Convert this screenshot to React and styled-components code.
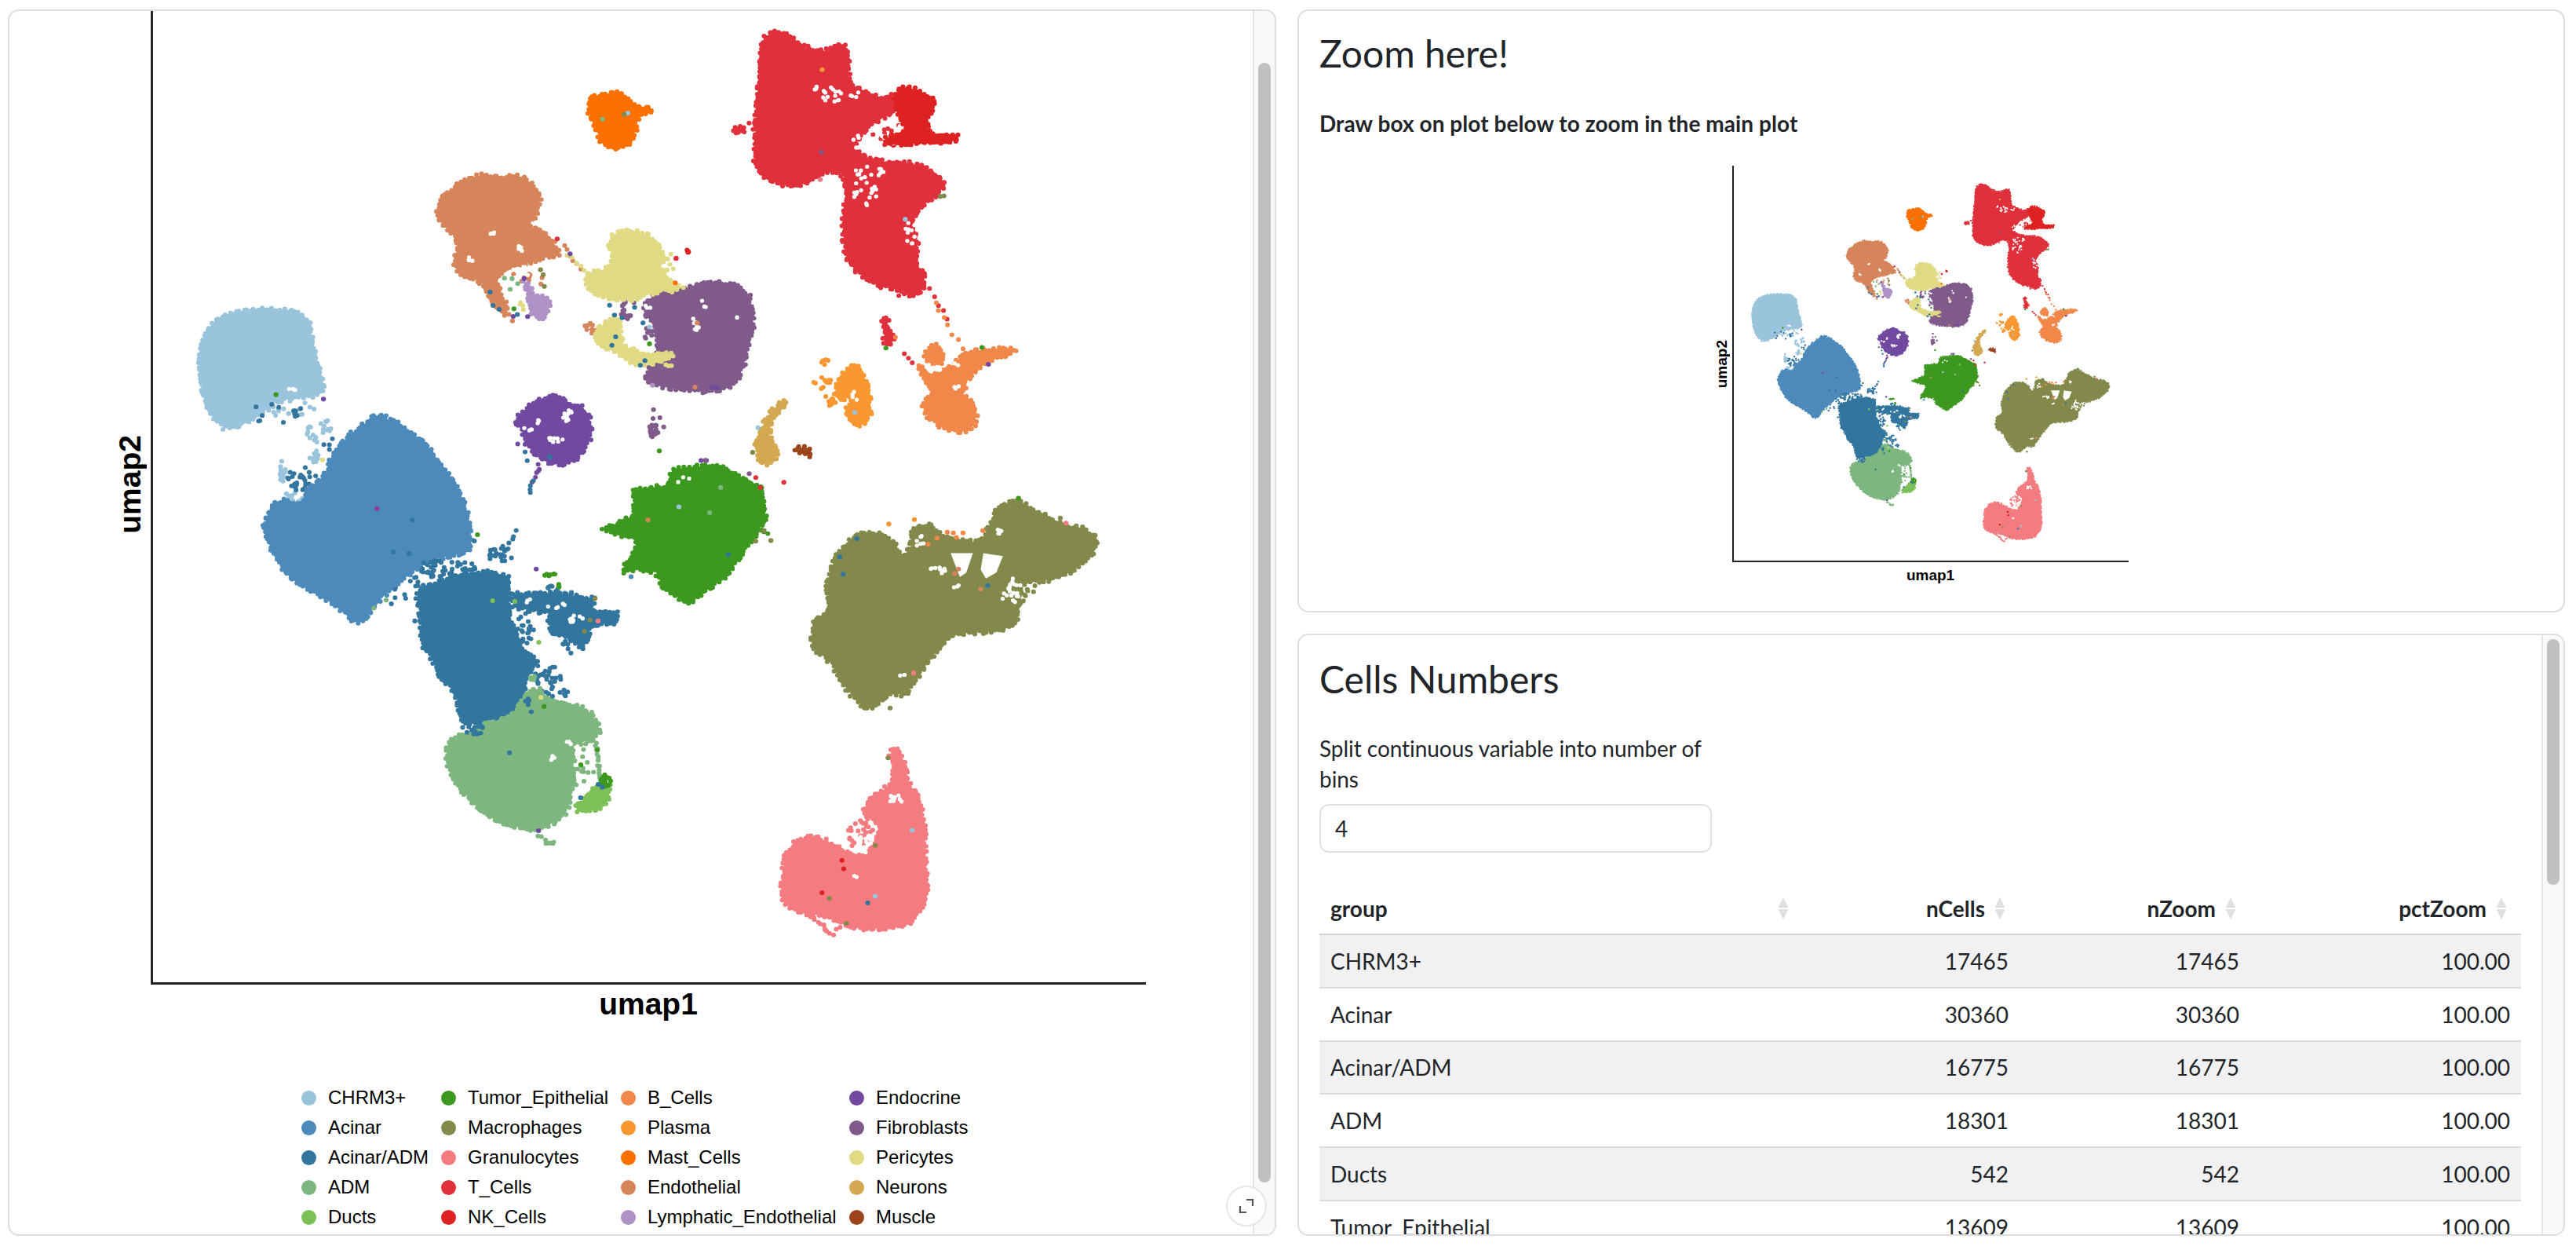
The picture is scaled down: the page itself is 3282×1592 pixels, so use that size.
import React from "react";
import styled, { createGlobalStyle } from "styled-components";

const C = {
  chrm: "#9AC3DC", acinar: "#4C8ABB", acinarAdm: "#32769F", adm: "#7DB77F", ducts: "#7CC057",
  tumor: "#3D981F", macro: "#83894A", gran: "#F47C80", t: "#E0303B", nk: "#DE2222",
  b: "#F1884A", plasma: "#F99731", mast: "#FC7000", endo: "#D6845A", lymph: "#AE91C6",
  endocrine: "#7149A0", fibro: "#7F5A8A", peri: "#E0DA85", neuron: "#D4A850", muscle: "#9C441B",
};

function mulberry(a) {
  return () => {
    a |= 0; a = (a + 0x6d2b79f5) | 0;
    let t = Math.imul(a ^ (a >>> 15), 1 | a);
    t = (t + Math.imul(t ^ (t >>> 7), 61 | t)) ^ t;
    return ((t ^ (t >>> 14)) >>> 0) / 4294967296;
  };
}
const rnd = mulberry(20240607);

/* data space of the scatter: the small plot's pixels; main plot pixels map onto it */
const toZ = (X, Y) => [148 + (X - 193) * 1.0402, 95 + (Y - 14) * 1.0887];
const crop = (ox, oy, sx, sy) => ({
  P: (pts) => pts.map(([x, y]) => toZ(ox + x / sx, oy + y / sy)),
  D: ([x, y, rx, ry, n]) => {
    const [a, b] = toZ(ox + x / sx, oy + y / sy);
    return [a, b, (rx / sx) * 1.04, (ry / sy) * 1.089, n];
  },
  T: ([x1, y1, x2, y2, n, s]) => {
    const [a, b] = toZ(ox + x1 / sx, oy + y1 / sy);
    const [c, d] = toZ(ox + x2 / sx, oy + y2 / sy);
    return [a, b, c, d, n, s];
  },
  S: ([x, y, col]) => {
    const [a, b] = toZ(ox + x / sx, oy + y / sy);
    return [a, b, col];
  },
});
const A = crop(320, 500, 3, 2.613);
const B = crop(540, 30, 2.063, 2.8);
const K = crop(960, 620, 3, 2.613);
const Z = crop(0, 0, 1.425, 1.96);

const chaikin = (pts) => {
  const out = [];
  pts.forEach((p, i) => {
    const q = pts[(i + 1) % pts.length];
    out.push([p[0] * 0.75 + q[0] * 0.25, p[1] * 0.75 + q[1] * 0.25]);
    out.push([p[0] * 0.25 + q[0] * 0.75, p[1] * 0.25 + q[1] * 0.75]);
  });
  return out;
};
const dot = (x, y) => `M${x.toFixed(1)} ${y.toFixed(1)}h.01`;
const edgeDots = (pts, step = 5, jitter = 2.2) => {
  let d = "";
  pts.forEach((p, i) => {
    const q = pts[(i + 1) % pts.length];
    const len = Math.hypot(q[0] - p[0], q[1] - p[1]);
    const n = Math.max(1, Math.round(len / step));
    for (let k = 0; k < n; k++) {
      const f = k / n;
      d += dot(p[0] + (q[0] - p[0]) * f + (rnd() - 0.5) * jitter * 2, p[1] + (q[1] - p[1]) * f + (rnd() - 0.5) * jitter * 2);
    }
  });
  return d;
};
const cloud = ([cx, cy, rx, ry, n]) => {
  let d = "";
  for (let i = 0; i < n; i++) {
    const a = rnd() * Math.PI * 2;
    const r = Math.sqrt(rnd());
    d += dot(cx + Math.cos(a) * r * rx, cy + Math.sin(a) * r * ry);
  }
  return d;
};
const trail = ([x1, y1, x2, y2, n, s]) => {
  let d = "";
  for (let i = 0; i < n; i++) {
    const f = i / Math.max(1, n - 1);
    d += dot(x1 + (x2 - x1) * f + (rnd() - 0.5) * s, y1 + (y2 - y1) * f + (rnd() - 0.5) * s);
  }
  return d;
};

const RAW = [
  { color: C.chrm,
    polys: [Z.P([[400,785],[480,770],[560,785],[565,870],[585,950],[585,990],[500,1000],[470,1040],[420,1075],[400,1070],[370,1020],[355,910],[370,830]])],
    clouds: [Z.D([530,1025,45,22,16]), A.D([240,130,35,40,14]), A.D([285,115,25,30,8]), A.D([235,210,18,30,12]), A.D([115,265,14,35,14]), A.D([150,350,45,22,10])],
    holes: [Z.D([530,970,16,6,4])] },
  { color: C.acinarAdm, polys: [], clouds: [Z.D([500,1035,55,24,14]), A.D([190,290,55,42,28]), A.D([290,170,20,30,4])] },
  { color: C.acinar,
    polys: [A.P([[450,95],[550,95],[590,130],[650,160],[700,215],[770,295],[800,350],[830,420],[840,520],[800,540],[740,550],[660,570],[600,610],[540,650],[470,710],[430,765],[390,770],[340,730],[270,685],[170,640],[110,590],[70,520],[40,465],[60,400],[100,355],[180,385],[215,320],[270,290],[310,200],[390,130]])],
    clouds: [A.D([480,88,45,12,14]), A.D([600,580,25,20,5])] },
  { color: C.acinarAdm, sharp: true,
    polys: [A.P([[640,650],[700,640],[780,610],[900,600],[980,615],[985,720],[990,780],[1040,870],[1095,900],[1050,960],[1040,1030],[980,1090],[880,1100],[810,1115],[790,1060],[780,1010],[720,950],[680,880],[650,850],[645,750],[630,690]]),
            A.P([[1000,675],[1150,670],[1310,690],[1300,730],[1395,735],[1395,770],[1330,775],[1290,790],[1290,830],[1260,855],[1190,810],[1140,800],[1135,740],[1000,720]])],
    clouds: [A.D([1040,790,42,52,26]), A.D([745,590,115,35,54]), A.D([950,545,48,30,24]), A.D([1130,960,55,50,26]), A.D([620,635,22,20,6]), A.D([555,680,35,30,4]), A.D([1150,655,25,12,5]), A.D([1200,840,30,20,4])],
    trails: [A.T([1005,465,990,510,4,6])],
    holes: [A.D([1180,715,50,8,5]), A.D([1240,760,28,14,8]), A.D([1070,700,30,8,3])] },
  { color: C.adm,
    polys: [A.P([[760,1160],[860,1120],[1000,1080],[1050,1000],[1085,985],[1130,1020],[1200,1040],[1280,1055],[1340,1130],[1300,1170],[1220,1160],[1230,1300],[1210,1400],[1150,1440],[1090,1465],[1000,1450],[900,1420],[810,1340],[750,1270],[742,1190]])],
    clouds: [A.D([1262,1250,48,80,18]), A.D([1140,1505,20,6,8]), A.D([1070,950,14,15,5])],
    trails: [A.T([1318,1170,1332,1290,14,4]), A.T([1095,1480,1125,1495,3,3])],
    holes: [A.D([1150,1225,8,14,4]), A.D([1210,1170,14,10,4])] },
  { color: C.acinarAdm, polys: [], clouds: [A.D([850,1125,50,18,16]), A.D([1170,1000,50,22,10]), A.D([1060,1030,24,18,4])] },
  { color: C.ducts, polys: [A.P([[1220,1405],[1300,1330],[1370,1290],[1365,1370],[1320,1395]])] },
  { color: C.tumor, sharp: true,
    polys: [Z.P([[1220,1175],[1300,1162],[1340,1190],[1385,1220],[1390,1300],[1370,1340],[1320,1440],[1250,1510],[1205,1475],[1190,1430],[1155,1425],[1130,1432],[1155,1370],[1150,1350],[1095,1325],[1150,1290],[1150,1225],[1210,1215]])],
    clouds: [A.D([1355,1298,24,22,18]), A.D([1140,612,22,6,8]), A.D([1170,650,6,10,3]), Z.D([1385,1335,12,10,5]), Z.D([1140,1410,12,20,6])],
    holes: [Z.D([1240,1200,16,8,3])] },
  { color: C.macro,
    polys: [K.P([[395,165],[460,150],[530,180],[570,240],[610,195],[600,170],[620,130],[690,130],[700,160],[790,180],[870,190],[910,120],[930,70],[1015,45],[1070,85],[1190,130],[1260,140],[1330,180],[1290,240],[1200,300],[1100,320],[1020,320],[1020,430],[980,480],[860,490],[770,495],[710,540],[660,600],[610,660],[580,700],[520,690],[470,740],[430,745],[370,695],[320,630],[290,580],[230,550],[220,490],[240,440],[290,420],[280,310],[330,210]])],
    clouds: [K.D([1050,350,45,22,10]), K.D([1020,390,22,14,4])],
    holes: [K.D([985,345,42,48,20]), K.D([710,280,32,14,9]), K.D([640,185,18,26,7]), K.D([785,340,18,8,3]), K.D([930,155,20,12,6]), K.D([570,632,16,5,3])],
    holePolys: [K.P([[755,225],[840,225],[815,290],[790,305]]), K.P([[880,225],[955,235],[930,290],[890,310],[870,280]])] },
  { color: C.gran,
    polys: [K.P([[520,875],[560,875],[585,960],[600,1000],[640,1050],[655,1130],[660,1280],[670,1360],[640,1420],[590,1470],[480,1480],[360,1475],[330,1455],[240,1430],[190,1430],[120,1400],[100,1350],[130,1200],[220,1165],[290,1190],[360,1220],[400,1240],[470,1200],[480,1120],[410,1100],[450,1040],[510,1010],[540,960]])],
    clouds: [K.D([400,1160,60,45,26])],
    trails: [K.T([222,1440,295,1495,10,5]), K.T([300,1495,350,1445,5,5])],
    holes: [K.D([540,1045,35,14,10]), K.D([390,1300,8,8,2]), K.D([425,1190,28,34,12])] },
  { color: C.t,
    polys: [B.P([[925,22],[960,40],[1010,95],[1060,100],[1105,65],[1120,130],[1115,215],[1160,240],[1190,265],[1240,255],[1240,320],[1200,340],[1170,370],[1135,420],[1150,470],[1200,495],[1300,500],[1365,550],[1365,600],[1310,650],[1280,720],[1300,780],[1290,850],[1320,910],[1310,960],[1285,975],[1250,950],[1190,940],[1130,880],[1105,820],[1100,680],[1110,620],[1105,530],[1060,530],[1020,560],[970,585],[900,560],[870,520],[870,400],[880,180],[885,60]]),
            B.P([[810,380],[835,360],[845,390],[820,392]]),
            B.P([[1200,1050],[1225,1055],[1215,1085],[1235,1115],[1235,1140],[1210,1150],[1212,1110]])],
    clouds: [B.D([1235,400,60,40,26]), B.D([1270,970,30,12,3])],
    trails: [B.T([1330,950,1375,1060,5,6]), B.T([1265,1178,1285,1212,3,2]), B.T([855,355,865,378,2,1]), B.T([662,840,695,815,2,1])],
    holes: [B.D([1070,255,28,30,14]), B.D([1235,400,68,50,32]), B.D([1300,460,32,24,16]), B.D([1175,525,45,25,12]), B.D([1160,600,32,52,20]), B.D([1280,750,14,42,10]), B.D([1140,430,18,30,8]), B.D([1030,230,5,14,3]), B.D([1135,255,20,12,4])] },
  { color: C.nk, polys: [B.P([[1260,220],[1335,260],[1345,300],[1320,350],[1330,395],[1405,395],[1405,420],[1330,430],[1220,430],[1215,405],[1275,385],[1245,320],[1235,260]])], clouds: [B.D([693,815,6,6,3])] },
  { color: C.b,
    polys: [B.P([[1320,1330],[1380,1290],[1420,1320],[1455,1390],[1445,1450],[1400,1465],[1340,1430],[1312,1380]]),
            B.P([[1295,1215],[1325,1250],[1380,1240],[1420,1180],[1470,1165],[1550,1160],[1555,1175],[1480,1210],[1430,1270],[1420,1310],[1340,1330],[1320,1290]]),
            B.P([[1340,1145],[1365,1170],[1370,1215],[1330,1215],[1312,1180]])],
    trails: [B.T([1345,1005,1415,1160,7,6]), B.T([1240,1120,1245,1125,1,1])],
    holes: [B.D([1345,1245,20,18,8]), B.D([1400,1300,10,10,3]), B.D([1410,1215,14,8,2])] },
  { color: C.plasma,
    polys: [B.P([[1120,1220],[1150,1230],[1165,1290],[1175,1360],[1175,1410],[1140,1445],[1100,1390],[1130,1340],[1090,1340],[1080,1290]])],
    clouds: [B.D([1050,1285,28,22,12]), B.D([1072,1345,18,25,10]), B.D([1055,1205,10,18,5])],
    holes: [B.D([1135,1330,10,22,4])] },
  { color: C.mast, polys: [B.P([[430,265],[480,250],[515,245],[540,280],[570,300],[600,305],[590,325],[560,330],[555,395],[525,450],[470,445],[450,370],[432,320]])] },
  { color: C.endo,
    polys: [B.P([[130,540],[200,548],[250,540],[300,590],[305,640],[290,700],[265,720],[320,740],[360,830],[330,830],[290,850],[240,870],[200,890],[185,920],[225,1035],[200,1040],[170,975],[150,920],[72,890],[90,770],[30,700],[35,640],[70,590]])],
    clouds: [B.D([225,880,40,20,10]), B.D([285,920,30,30,8]), B.D([435,1090,18,25,8])],
    trails: [B.T([368,790,410,878,6,4])],
    holes: [B.D([250,800,10,16,4]), B.D([120,840,6,22,3]), B.D([180,750,8,6,3]), B.D([250,890,26,24,10])] },
  { color: C.lymph, polys: [B.P([[255,920],[280,930],[280,975],[320,970],[335,1000],[315,1050],[285,1055],[280,1000]])] },
  { color: C.fibro,
    polys: [B.P([[610,960],[700,945],[720,925],[790,925],[850,950],[865,1030],[865,1100],[830,1270],[800,1305],[720,1320],[590,1290],[580,1260],[610,1200],[610,1090],[570,1020]])],
    clouds: [B.D([530,1030,16,30,14]), B.D([603,1455,13,26,22]), B.D([600,1000,25,30,6]), B.D([590,1110,12,30,6]), B.D([540,990,20,10,4])],
    trails: [B.T([602,1380,602,1412,2,1]), B.T([620,1408,630,1443,2,1])],
    holes: [B.D([738,1000,10,14,4]), B.D([712,1075,12,22,8]), B.D([820,1048,8,4,2]), B.D([590,1015,12,14,3])] },
  { color: C.peri,
    polys: [B.P([[500,745],[580,740],[630,810],[620,880],[640,920],[690,950],[600,960],[560,990],[470,985],[430,945],[420,895],[480,880],[500,830],[482,790]]),
            B.P([[480,1070],[510,1040],[515,1100],[520,1150],[570,1180],[650,1175],[650,1200],[590,1220],[550,1220],[500,1170],[450,1150],[445,1095]])],
    clouds: [B.D([640,860,20,40,6]), B.D([640,1225,14,8,3]), B.D([255,1015,6,20,4])],
    trails: [B.T([375,825,420,885,5,4])] },
  { color: C.endocrine,
    polys: [A.P([[1150,5],[1220,40],[1280,55],[1305,135],[1250,230],[1160,245],[1100,225],[1060,190],[1030,125],[1000,95],[1070,40]])],
    trails: [A.T([1100,245,1075,295,6,6]), A.T([1016,175,1045,175,2,1])],
    holes: [A.D([1210,80,24,22,12]), A.D([1060,125,22,8,5]), A.D([1170,160,50,14,8]), A.D([1090,100,14,6,3])] },
  { color: C.acinarAdm, polys: [], trails: [A.T([1075,300,1062,338,4,4]), A.T([1043,202,1052,230,2,1])], clouds: [A.D([1135,222,8,8,3])] },
  { color: C.neuron, polys: [B.P([[945,1345],[955,1350],[915,1420],[905,1480],[935,1530],[910,1575],[885,1575],[868,1500],[890,1440],[910,1390]])] },
  { color: C.muscle, polys: [B.P([[968,1525],[1010,1510],[1022,1550],[995,1540]])] },
];

const LAYERS = RAW.map((l) => {
  const polys = l.sharp ? l.polys : l.polys.map(chaikin);
  return {
    color: l.color,
    fill: polys.map((p) => "M" + p.map((q) => q.map((v) => v.toFixed(1)).join(" ")).join("L") + "Z").join(""),
    dots: polys.map((p) => edgeDots(p)).join("") + (l.clouds || []).map(cloud).join("") + (l.trails || []).map(trail).join(""),
    holes: (l.holes || []).map(cloud).join(""),
    holeFill: (l.holePolys || []).map((p) => "M" + p.map((q) => q.map((v) => v.toFixed(1)).join(" ")).join("L") + "Z").join(""),
  };
});

const SPECKS = [
  ...[[518,128,C.plasma],[616,113,C.plasma],[742,155,C.b],[765,158,C.b],[802,158,C.b],[878,150,C.b],[668,195,C.b],[703,175,C.b],[777,173,C.b],
     [785,278,C.endo],[770,293,C.endo],[870,345,C.endo],[395,177,C.acinarAdm],[897,333,C.acinarAdm],[343,295,C.acinarAdm],[330,238,C.acinarAdm],
     [1015,42,C.tumor],[1197,125,C.gran],[613,625,C.gran],[523,742,C.macro],[1117,95,C.macro],[1175,108,C.macro],
     [338,1250,C.nk],[345,1278,C.nk],[262,1358,C.nk],[290,1377,C.macro],[466,1200,C.macro],[355,1460,C.macro],[515,908,C.macro],
     [437,1392,C.acinarAdm],[466,1370,C.chrm],[607,1150,C.chrm],[40,150,C.macro],[8,185,C.macro],[66,183,C.macro]].map(K.S),
  ...[[1047,165,C.plasma],[1045,460,C.fibro],[1042,558,C.gran],[1266,700,C.chrm],[1358,618,C.macro],[1368,616,C.macro],[1215,1160,C.tumor],
     [1468,1158,C.tumor],[1485,1218,C.endocrine],[468,342,C.adm],[535,320,C.chrm],[525,325,C.macro],[349,770,C.t],[383,823,C.endocrine],
     [694,815,C.nk],[662,840,C.t],[660,927,C.mast],[172,960,C.acinarAdm],[180,1008,C.acinarAdm],[196,1022,C.acinarAdm],[235,1020,C.tumor],
     [233,1047,C.endocrine],[244,1040,C.acinarAdm],[271,1048,C.endocrine],[231,1063,C.endo],[210,910,C.adm],[230,912,C.adm],[245,930,C.adm],[225,950,C.adm],[262,912,C.endocrine],
     [315,940,C.macro],[305,880,C.macro],[312,898,C.macro],[487,1007,C.acinarAdm],[500,1042,C.acinarAdm],[520,1052,C.acinarAdm],[553,1015,C.acinarAdm],[503,1120,C.acinarAdm],[493,1150,C.acinarAdm],
     [575,1070,C.acinarAdm],[592,1085,C.chrm],[592,1145,C.tumor],[580,1205,C.acinarAdm],[568,1222,C.acinarAdm],[718,1070,C.endo],[712,1300,C.endo],[600,1293,C.lymph],
     [1133,1390,C.chrm],[878,1445,C.chrm],[864,1533,C.macro],[618,1528,C.tumor],[757,1302,C.endocrine],[770,1302,C.endocrine],[728,1562,C.endocrine],[742,1562,C.endocrine]].map(B.S),
  ...[[477,390,"#8E3A9A"],[862,477,C.tumor],[850,498,C.acinarAdm],[612,428,C.acinarAdm],[540,535,C.acinarAdm],[600,540,C.acinarAdm],[512,695,C.adm],[465,722,C.adm],[532,708,C.acinarAdm],
     [622,765,C.acinarAdm],[1087,592,C.endocrine],[920,697,C.ducts],[1005,700,C.ducts],[1097,836,C.ducts],[1324,765,C.gran],[1293,762,C.macro],[1272,800,C.macro],[1312,690,C.macro],
     [1105,1020,C.peri],[1117,1050,C.tumor],[1068,1068,C.acinarAdm],[1322,1195,C.tumor],[1258,1245,C.tumor],[1325,1310,C.acinarAdm],[1340,1320,C.acinarAdm],[1257,1355,C.acinarAdm],
     [1096,1465,C.endocrine],[268,228,C.peri],[272,25,C.endocrine],[90,10,C.tumor],[985,1205,C.acinarAdm],[1222,670,C.acinarAdm],[1190,842,C.acinarAdm],[1220,872,C.acinarAdm],[1515,428,C.endo]].map(A.S),
  ...[[1232,1268,C.chrm],[1308,1220,C.adm],[1288,1283,C.adm],[1322,1388,C.acinarAdm],[1145,1443,C.acinar],[1280,1152,C.fibro],[1360,1185,C.fibro],[1372,1195,C.t],[1423,1207,C.t],[1380,1220,C.t]].map(Z.S),
];

const Scatter = ({ viewBox }) => (
  <PlotSvg viewBox={viewBox} preserveAspectRatio="none">
    {LAYERS.map((l, i) => (
      <g key={i}>
        {l.fill && <path d={l.fill} fill={l.color} />}
        {l.dots && <path d={l.dots} fill="none" stroke={l.color} strokeWidth="6.4" strokeLinecap="round" />}
        {l.holes && <path d={l.holes} fill="none" stroke="#fff" strokeWidth="5.6" strokeLinecap="round" />}
        {l.holeFill && <path d={l.holeFill} fill="#fff" />}
      </g>
    ))}
    {SPECKS.map(([x, y, c], i) => (
      <circle key={i} cx={x} cy={y} r="3.3" fill={c} />
    ))}
  </PlotSvg>
);

const GlobalStyle = createGlobalStyle`
  html, body { margin: 0; padding: 0; background: #fff; }
  body { font-family: "Lato", "Noto Sans", sans-serif; color: #212529; }
  * { box-sizing: border-box; }
`;

const Page = styled.div`
  width: 3282px;
  height: 1592px;
  padding: 12px 14px 18px 10px;
  display: grid;
  grid-template-columns: 1616px 1615px;
  column-gap: 27px;
  overflow: hidden;
`;
const RightColumn = styled.div`
  display: grid;
  grid-template-rows: 768px 767px;
  row-gap: 27px;
  min-height: 0;
`;
const Card = styled.section`
  position: relative;
  display: flex;
  min-height: 0;
  min-width: 0;
  border: 2px solid #dedede;
  border-radius: 14px;
  background: #fff;
  overflow: hidden;
`;
const CardBody = styled.div`
  flex: 1;
  min-width: 0;
  overflow: hidden;
  padding: ${(p) => p.$padding || "0"};
`;
const ScrollTrack = styled.div`
  flex: 0 0 28px;
  background: #f9f9f9;
  border-left: 2px solid #e6e6e6;
  padding-left: 5px;
`;
const ScrollThumb = styled.div`
  width: 16px;
  margin-top: ${(p) => p.$top}px;
  height: ${(p) => p.$height}px;
  border-radius: 8px;
  background: #c1c1c1;
`;
const ExpandButton = styled.button`
  position: absolute;
  right: 10px;
  bottom: 10px;
  width: 52px;
  height: 52px;
  padding: 0;
  border-radius: 50%;
  border: 2px solid #e6e6e6;
  background: rgba(255, 255, 255, 0.82);
  display: flex;
  align-items: center;
  justify-content: center;
  svg { display: block; }
`;

/* plot figure */
const Figure = styled.div`
  display: grid;
  grid-template-columns: ${(p) => p.$labelCol}px ${(p) => p.$w}px;
  grid-template-rows: ${(p) => p.$h}px auto;
  margin: ${(p) => p.$top || 0}px 0 0 ${(p) => p.$left || 0}px;
`;
const YLabel = styled.div`
  justify-self: end;
  align-self: center;
  writing-mode: vertical-rl;
  transform: rotate(180deg);
  font: bold ${(p) => p.$size}px/1 "Liberation Sans", Arial, sans-serif;
  color: #000;
  margin-right: ${(p) => p.$gap}px;
  margin-bottom: ${(p) => p.$shift}px;
`;
const Canvas = styled.div`
  border-left: ${(p) => p.$stroke}px solid #222;
  border-bottom: ${(p) => p.$stroke}px solid #222;
  min-width: 0;
  min-height: 0;
`;
const PlotSvg = styled.svg`
  display: block;
  width: 100%;
  height: 100%;
`;
const XLabel = styled.div`
  grid-column: 2;
  text-align: center;
  font: bold ${(p) => p.$size}px/1 "Liberation Sans", Arial, sans-serif;
  color: #000;
  margin-top: ${(p) => p.$gap}px;
`;

/* legend */
const Legend = styled.div`
  display: grid;
  grid-template-rows: repeat(5, 38px);
  grid-auto-flow: column;
  grid-template-columns: 178px 229px 291px auto;
  justify-content: start;
  margin: 81px 0 0 372px;
  font: 24px/1 "Liberation Sans", Arial, sans-serif;
  color: #000;
`;
const LegendItem = styled.div`
  display: flex;
  align-items: center;
  gap: 15px;
  white-space: nowrap;
`;
const LegendDot = styled.span`
  flex: none;
  width: 19px;
  height: 19px;
  border-radius: 50%;
  background: ${(p) => p.$color};
`;

/* right side text */
const Title = styled.h3`
  margin: 0;
  font-size: 48px;
  line-height: 60px;
  font-weight: 400;
  color: #212529;
`;
const Lead = styled.p`
  margin: 39px 0 0;
  font-size: 28px;
  letter-spacing: 0.07px;
  line-height: 40px;
  font-weight: 700;
`;
const FieldLabel = styled.label`
  display: block;
  width: 500px;
  margin-top: 39px;
  font-size: 28px;
  letter-spacing: -0.05px;
  line-height: 39px;
`;
const NumberInput = styled.input`
  display: block;
  width: 500px;
  height: 62px;
  margin-top: 12px;
  padding: 0 18px;
  border: 2px solid #dee2e6;
  border-radius: 12px;
  font: inherit;
  font-size: 28px;
  color: #212529;
  outline: none;
`;
const Table = styled.table`
  width: 1531px;
  margin-top: 39px;
  border-collapse: collapse;
  table-layout: fixed;
  font-size: 28px;
`;
const HeadCell = styled.th`
  height: 65px;
  padding: 0 ${(p) => (p.$align === "right" ? "44px" : "14px")} 0 14px;
  text-align: ${(p) => p.$align || "left"};
  font-weight: 700;
  border-bottom: 2px solid #d3d3d3;
  position: relative;
`;
const SortIcon = styled.svg`
  position: absolute;
  right: 18px;
  top: 17px;
`;
const Row = styled.tr`
  background: ${(p) => (p.$odd ? "#f1f1f1" : "#fff")};
`;
const Cell = styled.td`
  height: 67.8px;
  padding: 0 14px;
  text-align: ${(p) => p.$align || "left"};
  border-bottom: 2px solid #dcdcdc;
`;

const Sort = () => (
  <SortIcon width="14" height="30" viewBox="0 0 14 30">
    <path d="M7 1 L13 13 Q13.5 14 12 14 L2 14 Q.5 14 1 13 Z" fill="#e0e0e0" />
    <path d="M7 29 L13 17 Q13.5 16 12 16 L2 16 Q.5 16 1 17 Z" fill="#e0e0e0" />
  </SortIcon>
);

const LEGEND = [
  ["CHRM3+", C.chrm], ["Acinar", C.acinar], ["Acinar/ADM", C.acinarAdm], ["ADM", C.adm], ["Ducts", C.ducts],
  ["Tumor_Epithelial", C.tumor], ["Macrophages", C.macro], ["Granulocytes", C.gran], ["T_Cells", C.t], ["NK_Cells", C.nk],
  ["B_Cells", C.b], ["Plasma", C.plasma], ["Mast_Cells", C.mast], ["Endothelial", C.endo], ["Lymphatic_Endothelial", C.lymph],
  ["Endocrine", C.endocrine], ["Fibroblasts", C.fibro], ["Pericytes", C.peri], ["Neurons", C.neuron], ["Muscle", C.muscle],
];
const ROWS = [
  ["CHRM3+", 17465], ["Acinar", 30360], ["Acinar/ADM", 16775], ["ADM", 18301], ["Ducts", 542], ["Tumor_Epithelial", 13609],
];

export default function App() {
  return (
    <Page>
      <GlobalStyle />
      <Card>
        <CardBody>
          <Figure $labelCol={180} $w={1268} $h={1240}>
            <YLabel $size={39} $gap={7} $shift={34}>umap2</YLabel>
            <Canvas $stroke={3}>
              <Scatter viewBox="148 95 1319 1350" />
            </Canvas>
            <XLabel $size={39} $gap={5}>umap1</XLabel>
          </Figure>
          <Legend>
            {LEGEND.map(([name, color]) => (
              <LegendItem key={name}>
                <LegendDot $color={color} />
                {name}
              </LegendItem>
            ))}
          </Legend>
        </CardBody>
        <ScrollTrack>
          <ScrollThumb $top={66} $height={1426} />
        </ScrollTrack>
        <ExpandButton aria-label="Expand">
          <svg width="20" height="20" viewBox="0 0 20 20" fill="none" stroke="#555" strokeWidth="2.2">
            <path d="M10 2 H18 V10" />
            <path d="M2 10 V18 H10" />
          </svg>
        </ExpandButton>
      </Card>
      <RightColumn>
        <Card>
          <CardBody $padding="24px 26px">
            <Title>Zoom here!</Title>
            <Lead>Draw box on plot below to zoom in the main plot</Lead>
            <Figure $labelCol={36} $w={505} $h={505} $left={490} $top={34}>
              <YLabel $size={19} $gap={4} $shift={0}>umap2</YLabel>
              <Canvas $stroke={2}>
                <Scatter viewBox="148 58 1319 1389" />
              </Canvas>
              <XLabel $size={19} $gap={7}>umap1</XLabel>
            </Figure>
          </CardBody>
        </Card>
        <Card>
          <CardBody $padding="26px 26px 0">
            <Title>Cells Numbers</Title>
            <FieldLabel>Split continuous variable into number of bins</FieldLabel>
            <NumberInput type="number" defaultValue={4} />
            <Table>
              <colgroup>
                <col width="616" />
                <col width="276" />
                <col width="294" />
                <col width="345" />
              </colgroup>
              <thead>
                <tr>
                  <HeadCell>group<Sort /></HeadCell>
                  <HeadCell $align="right">nCells<Sort /></HeadCell>
                  <HeadCell $align="right">nZoom<Sort /></HeadCell>
                  <HeadCell $align="right">pctZoom<Sort /></HeadCell>
                </tr>
              </thead>
              <tbody>
                {ROWS.map(([name, n], i) => (
                  <Row key={name} $odd={i % 2 === 0}>
                    <Cell>{name}</Cell>
                    <Cell $align="right">{n}</Cell>
                    <Cell $align="right">{n}</Cell>
                    <Cell $align="right">100.00</Cell>
                  </Row>
                ))}
              </tbody>
            </Table>
          </CardBody>
          <ScrollTrack>
            <ScrollThumb $top={5} $height={313} />
          </ScrollTrack>
        </Card>
      </RightColumn>
    </Page>
  );
}
